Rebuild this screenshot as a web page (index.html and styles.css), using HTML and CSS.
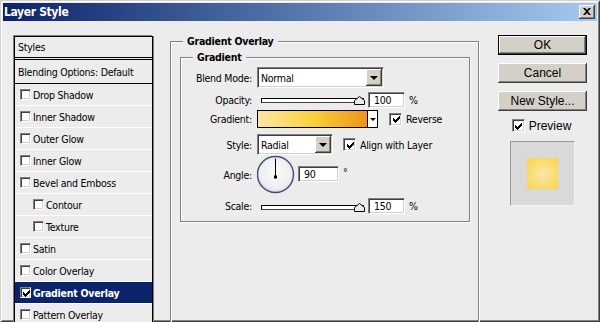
FILE: index.html
```html
<!DOCTYPE html>
<html>
<head>
<meta charset="utf-8">
<link rel="stylesheet" href="styles.css">
</head>
<body>
<div class="window">
  <div class="titlebar">
    <span class="title">Layer Style</span>
    <span class="close"><svg width="8" height="7" viewBox="0 0 8 7"><path d="M0 0h2l2 2 2-2h2L5 3.5 8 7H6L4 5 2 7H0l3-3.5z" fill="#000"/></svg></span>
  </div>
  <div class="content">
    <div class="list">
      <div class="row row-head">Styles</div>
      <div class="row row-blend">Blending Options: Default</div>
      <div class="row item"><span class="cb"></span>Drop Shadow</div>
      <div class="row item"><span class="cb"></span>Inner Shadow</div>
      <div class="row item"><span class="cb"></span>Outer Glow</div>
      <div class="row item"><span class="cb"></span>Inner Glow</div>
      <div class="row item"><span class="cb"></span>Bevel and Emboss</div>
      <div class="row item sub"><span class="cb"></span>Contour</div>
      <div class="row item sub"><span class="cb"></span>Texture</div>
      <div class="row item"><span class="cb"></span>Satin</div>
      <div class="row item"><span class="cb"></span>Color Overlay</div>
      <div class="row item selected"><span class="cb checked"><svg width="7" height="7" viewBox="0 0 7 7"><path d="M0 2h1v1h1v1h1V3h1V2h1V1h1V0h1v3H6v1H5v1H4v1H3v1H2V6H1V5H0z" fill="#000"/></svg></span>Gradient Overlay</div>
      <div class="row item"><span class="cb"></span>Pattern Overlay</div>
    </div>

    <div class="group group-outer">
      <span class="group-title">Gradient Overlay</span>
      <div class="group group-inner">
        <span class="group-title">Gradient</span>

        <div class="frow r1">
          <span class="lbl">Blend Mode:</span>
          <div class="select select-wide"><span class="sel-text">Normal</span><span class="dd-btn"><i class="tri"></i></span></div>
        </div>

        <div class="frow r2">
          <span class="lbl">Opacity:</span>
          <div class="slider"><span class="track"></span><svg class="thumb" width="11" height="9" viewBox="0 0 11 9"><path d="M0.5 8.5V4.5L5.5 0.5L10.5 4.5V8.5Z" fill="#ececec" stroke="#000"/></svg></div>
          <span class="num">100</span>
          <span class="unit">%</span>
        </div>

        <div class="frow r3">
          <span class="lbl">Gradient:</span>
          <div class="grad"><span class="grad-fill"></span><span class="grad-btn"><i class="tri tri-sm"></i></span></div>
          <span class="cb cb-lg checked rev"><svg width="7" height="7" viewBox="0 0 7 7"><path d="M0 2h1v1h1v1h1V3h1V2h1V1h1V0h1v3H6v1H5v1H4v1H3v1H2V6H1V5H0z" fill="#000"/></svg></span>
          <span class="cb-text">Reverse</span>
        </div>

        <div class="frow r4">
          <span class="lbl">Style:</span>
          <div class="select select-narrow"><span class="sel-text">Radial</span><span class="dd-btn"><i class="tri"></i></span></div>
          <span class="cb cb-lg checked align"><svg width="7" height="7" viewBox="0 0 7 7"><path d="M0 2h1v1h1v1h1V3h1V2h1V1h1V0h1v3H6v1H5v1H4v1H3v1H2V6H1V5H0z" fill="#000"/></svg></span>
          <span class="cb-text">Align with Layer</span>
        </div>

        <div class="frow r5">
          <span class="lbl">Angle:</span>
          <svg class="dial" width="38" height="39" viewBox="0 0 38 39">
            <defs>
              <radialGradient id="dg" cx="50%" cy="45%" r="55%">
                <stop offset="0" stop-color="#fbfbfb"/>
                <stop offset="0.8" stop-color="#eeeeee"/>
                <stop offset="1" stop-color="#d6d6d6"/>
              </radialGradient>
            </defs>
            <circle cx="18.5" cy="19.5" r="18" fill="url(#dg)" stroke="#3e4f7c" stroke-width="1.4"/>
            <line x1="18.5" y1="3.5" x2="18.5" y2="21.5" stroke="#000" stroke-width="1"/>
            <rect x="17" y="20.5" width="3" height="3" fill="#000"/>
          </svg>
          <span class="num num-angle">90</span>
          <span class="deg">°</span>
        </div>

        <div class="frow r6">
          <span class="lbl">Scale:</span>
          <div class="slider"><span class="track"></span><svg class="thumb" width="11" height="9" viewBox="0 0 11 9"><path d="M0.5 8.5V4.5L5.5 0.5L10.5 4.5V8.5Z" fill="#ececec" stroke="#000"/></svg></div>
          <span class="num">150</span>
          <span class="unit">%</span>
        </div>
      </div>
    </div>

    <div class="side">
      <div class="btn btn-default">OK</div>
      <div class="btn">Cancel</div>
      <div class="btn">New Style...</div>
      <div class="preview-row">
        <span class="cb cb-lg checked"><svg width="7" height="7" viewBox="0 0 7 7"><path d="M0 2h1v1h1v1h1V3h1V2h1V1h1V0h1v3H6v1H5v1H4v1H3v1H2V6H1V5H0z" fill="#000"/></svg></span>
        <span class="preview-text">Preview</span>
      </div>
      <div class="preview-box"><span class="swatch"></span></div>
    </div>
  </div>
</div>
</body>
</html>
```

FILE: styles.css
```css
* { box-sizing: border-box; }
html, body { margin: 0; padding: 0; }
body {
  width: 600px;
  height: 322px;
  overflow: hidden;
  background: #ececec;
  font-family: "DejaVu Sans Condensed", "DejaVu Sans", sans-serif;
  font-size: 10.5px;
  letter-spacing: -0.25px;
  color: #000;
}
.window {
  width: 600px;
  height: 322px;
  padding: 3px;
  background: #ececec;
  box-shadow: inset 1px 1px 0 #d4d0c8, inset -1px -1px 0 #404040, inset 2px 2px 0 #fff, inset -2px -2px 0 #808080;
  overflow: hidden;
  display: flex;
  flex-direction: column;
}
.titlebar {
  height: 18px;
  margin-bottom: 1px;
  flex: none;
  background: linear-gradient(to right, #0a246a, #a6caf0);
  display: flex;
  align-items: center;
  justify-content: space-between;
  padding: 0 2px 0 1px;
}
.title {
  color: #fff;
  font-weight: bold;
  font-size: 12px;
  letter-spacing: -0.35px;
}
.close {
  width: 16px;
  height: 14px;
  background: #d4d0c8;
  box-shadow: inset -1px -1px 0 #404040, inset 1px 1px 0 #fff, inset -2px -2px 0 #808080;
  display: flex;
  align-items: center;
  justify-content: center;
  padding: 0 1px 1px 0;
}
.close svg { display: block; }

.content {
  flex: 1;
  display: flex;
  align-items: flex-start;
  padding: 14px 0 0 11px;
  min-height: 0;
}

/* list */
.list {
  width: 139px;
  height: 300px;
  flex: none;
  border: 1px solid #000;
  border-bottom: 0;
  box-shadow: -1px -1px 0 #808080, 1px 0 0 #808080;
  background: #ececec;
}
.row {
  display: flex;
  align-items: center;
  padding-left: 3px;
  white-space: nowrap;
}
.row-head {
  height: 23px;
  border-bottom: 3px double #000;
}
.row-blend {
  height: 24px;
  border-bottom: 1px solid #000;
}
.item {
  height: 22px;
  border-bottom: 1px solid #fff;
}
.item.sub { padding-left: 16px; }
.item.selected {
  background: #0a246a;
  color: #fff;
  font-weight: bold;
}

.cb {
  width: 11px;
  height: 11px;
  flex: none;
  background: #fff;
  border: 1px solid;
  border-color: #808080 #fff #fff #808080;
  box-shadow: inset 1px 1px 0 #404040, inset -1px -1px 0 #d4d0c8;
  margin: 0 2px 0 2px;
  display: flex;
  align-items: center;
  justify-content: center;
  padding: 1px 0 0 1px;
}
.cb svg { display: block; }
.cb-lg {
  width: 13px;
  height: 13px;
  margin: 0;
}

/* groups */
.group {
  position: relative;
  border: 1px solid #808080;
  box-shadow: inset 1px 1px 0 #fff, 1px 1px 0 #fff;
}
.group-title {
  position: absolute;
  top: -8px;
  left: 12px;
  padding: 0 5px 0 4px;
  background: #ececec;
  font-weight: bold;
  line-height: 14px;
  white-space: nowrap;
}
.group-outer {
  margin: 5px 0 0 17px;
  width: 309px;
  height: 300px;
  flex: none;
  padding: 15px 8px 0 9px;
}
.group-inner {
  width: 290px;
  height: 165px;
  padding: 9px 0 0 0;
  display: flex;
  flex-direction: column;
}

.frow {
  display: flex;
  align-items: center;
  flex: none;
}
.lbl {
  width: 71px;
  margin-right: 5px;
  text-align: right;
  white-space: nowrap;
}
.r1 { height: 21px; }
.r2 { height: 17px; margin-top: 3px; }
.r3 { height: 18px; margin-top: 2px; }
.r4 { height: 21px; margin-top: 6px; }
.r5 { height: 39px; }
.r6 { height: 16px; margin-top: 4px; }

.select {
  height: 21px;
  background: #fff;
  border: 1px solid;
  border-color: #808080 #fff #fff #808080;
  box-shadow: inset 1px 1px 0 #404040, inset -1px -1px 0 #d4d0c8;
  display: flex;
  align-items: center;
  padding: 2px 1px 2px 3px;
}
.select-wide { width: 127px; }
.select-narrow { width: 76px; }
.sel-text { flex: 1; }
.dd-btn {
  width: 16px;
  height: 17px;
  flex: none;
  background: #d4d0c8;
  box-shadow: inset -1px -1px 0 #404040, inset 1px 1px 0 #fff, inset -2px -2px 0 #808080;
  display: flex;
  align-items: center;
  justify-content: center;
  padding: 0 1px 0 0;
}
.tri {
  display: block;
  width: 0;
  height: 0;
  border-left: 4px solid transparent;
  border-right: 4px solid transparent;
  border-top: 4px solid #000;
}
.tri-sm {
  border-left-width: 3px;
  border-right-width: 3px;
  border-top-width: 3px;
}

.slider {
  position: relative;
  width: 107px;
  height: 12px;
  margin-top: 3px;
  flex: none;
}
.track {
  position: absolute;
  left: 4px;
  top: 3px;
  width: 103px;
  height: 5px;
  background: #fff;
  border: 1px solid #000;
  border-right-color: #404040;
  border-bottom-color: #404040;
}
.thumb {
  position: absolute;
  left: 97px;
  top: 1px;
  display: block;
}
.num {
  width: 37px;
  height: 16px;
  margin-left: 4px;
  flex: none;
  background: #fff;
  border: 1px solid;
  border-color: #808080 #fff #fff #808080;
  box-shadow: inset 1px 1px 0 #404040, inset -1px -1px 0 #d4d0c8;
  padding: 0 0 0 5px;
  display: flex;
  align-items: center;
}
.unit { margin-left: 4px; }

.grad {
  width: 121px;
  height: 18px;
  border: 1px solid #000;
  display: flex;
  flex: none;
}
.grad-fill {
  flex: 1;
  background: linear-gradient(to right, #fce6a2, #f9d13d 50%, #ee9418);
}
.grad-btn {
  width: 10px;
  flex: none;
  border-left: 1px solid #000;
  background: #fff;
  display: flex;
  align-items: center;
  justify-content: center;
}
.rev { margin-left: 11px; }
.align { margin-left: 10px; }
.cb-text { margin-left: 4px; white-space: nowrap; }

.dial { display: block; flex: none; }
.num-angle { width: 41px; height: 16px; margin-left: 3px; margin-top: -2px; }
.deg { margin-left: 4px; margin-top: -6px; }

/* side */
.side {
  margin: -1px 0 0 19px;
  width: 89px;
  flex: none;
  display: flex;
  flex-direction: column;
  align-items: center;
  font-family: "Liberation Sans", Arial, sans-serif;
  font-size: 12px;
  letter-spacing: 0;
}
.btn {
  width: 89px;
  height: 20px;
  margin-bottom: 8px;
  background: #d4d0c8;
  box-shadow: inset -1px -1px 0 #404040, inset 1px 1px 0 #fff, inset -2px -2px 0 #808080;
  display: flex;
  align-items: center;
  justify-content: center;
  padding-bottom: 1px;
}
.btn-default {
  border: 1px solid #000;
}
.preview-row {
  display: flex;
  align-items: center;
  height: 13px;
  margin-left: -2px;
}
.preview-text { margin-left: 4px; }
.preview-box {
  width: 65px;
  height: 65px;
  margin-top: 9px;
  background: #d9d9d9;
  border: 1px solid;
  border-color: #9a9a9a #f4f4f4 #f4f4f4 #9a9a9a;
  display: flex;
  align-items: center;
  justify-content: center;
}
.swatch {
  width: 31px;
  height: 31px;
  background: radial-gradient(#f8e9b0, #fbdc6c 60%, #fdd443);
}
```
